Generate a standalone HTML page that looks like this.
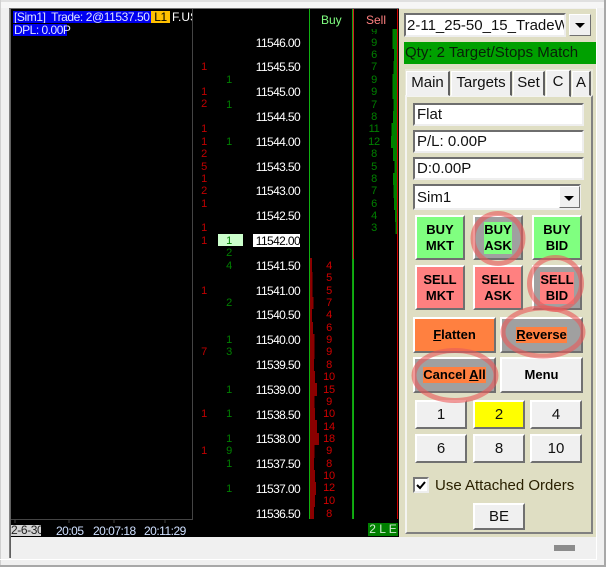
<!DOCTYPE html>
<html><head><meta charset="utf-8"><style>
html,body{margin:0;padding:0}
body{width:606px;height:567px;position:relative;overflow:hidden;background:#f0f0f0;font-family:"Liberation Sans",sans-serif}
div,span.a{position:absolute;box-sizing:border-box}
.n{position:absolute;font-size:11px;letter-spacing:-.3px;line-height:12px;height:12px;width:24px;text-align:center;white-space:pre}
.r{left:192px;color:#c00000}.g{left:217px;color:#008000}.s{left:317px;color:#d00000}.b{left:362px;color:#008000}
.p{position:absolute;left:240px;width:60px;text-align:right;font-size:12px;letter-spacing:-.62px;line-height:12px;color:#fff}
.t{font-size:12px;letter-spacing:-.5px;line-height:12px;color:#cfe0ff;white-space:nowrap}
.box{background:#fff;border:2px solid;border-color:#6e6e6e #eee #eee #6e6e6e;font-size:15px;line-height:19px;padding-left:2px;color:#111;white-space:nowrap;overflow:hidden}
.btn{border:2px solid;border-color:#fff #707070 #707070 #fff;display:flex;align-items:center;justify-content:center;text-align:center;font-size:13px;font-weight:bold;line-height:16px;color:#000}
.num{border:2px solid;border-color:#fff #707070 #707070 #fff;background:#f0f0f0;display:flex;align-items:center;justify-content:center;font-size:15px;color:#111}
.tab{border:1px solid;border-color:#fff #606060 #f0f0f0 #fff;border-right-width:2px;background:#f0f0f0;font-size:15px;line-height:22px;text-align:center;color:#111;overflow:hidden}
.arr{position:absolute;width:0;height:0;border-left:5px solid transparent;border-right:5px solid transparent;border-top:5px solid #000}
u{text-decoration:underline}
</style></head><body>
<div style="left:0;top:0;width:606px;height:2px;background:#e0e0e0"></div>
<div style="left:0;top:2px;width:606px;height:6px;background:#f6f6f6"></div>
<div style="left:0;top:0;width:1px;height:567px;background:#d0d0d0"></div>
<div style="left:604px;top:0;width:2px;height:567px;background:#a8a8a8"></div>
<div style="left:0;top:565px;width:606px;height:2px;background:#a8a8a8"></div>
<div style="left:0;top:559px;width:597px;height:1px;background:#fff"></div>
<div style="left:596px;top:8px;width:1px;height:552px;background:#fff"></div>
<div style="left:9px;top:8px;width:1px;height:550px;background:#808080"></div>
<div style="left:10px;top:8px;width:1px;height:550px;background:#606060"></div>
<div style="left:9px;top:8px;width:390px;height:1px;background:#707070"></div>
<!-- chart -->
<div style="left:11px;top:9px;width:388px;height:528px;background:#000;overflow:hidden"></div>
<div style="left:192px;top:9px;width:1px;height:511px;background:#444"></div>
<div style="left:11px;top:519px;width:182px;height:1px;background:#444"></div>
<div style="left:309px;top:9px;width:1px;height:510px;background:#10b010"></div>
<div style="left:352px;top:9px;width:1px;height:510px;background:#10a010"></div>
<div style="left:353px;top:9px;width:1px;height:250px;background:#d02020"></div>
<div style="left:353px;top:259px;width:1px;height:260px;background:#10b010"></div>
<div style="left:397px;top:9px;width:1px;height:510px;background:#d00000"></div>
<svg style="position:absolute;left:0;top:0" width="606" height="567">
<g fill="#008000">
<rect x="392.500" y="29" width="4.500" height="20"/><rect x="394" y="49" width="3" height="12"/><rect x="393.500" y="61" width="3.500" height="13"/><rect x="392.500" y="74" width="4.500" height="25"/><rect x="393.500" y="99" width="3.500" height="12"/><rect x="393" y="111" width="4" height="12"/><rect x="391.500" y="123" width="5.500" height="13"/><rect x="391" y="136" width="6" height="12"/><rect x="393" y="148" width="4" height="13"/><rect x="394.500" y="161" width="2.500" height="12"/><rect x="393" y="173" width="4" height="12"/><rect x="393.500" y="185" width="3.500" height="13"/><rect x="394" y="198" width="3" height="12"/><rect x="395" y="210" width="2" height="12"/><rect x="395.500" y="222" width="1.500" height="12"/>
</g>
<g fill="#8b0000">
<rect x="310" y="258" width="2" height="14"/><rect x="310" y="272" width="2.500" height="25"/><rect x="310" y="297" width="3.500" height="12"/><rect x="310" y="309" width="2" height="13"/><rect x="310" y="322" width="3" height="12"/><rect x="310" y="334" width="4.500" height="25"/><rect x="310" y="359" width="4" height="12"/><rect x="310" y="371" width="5" height="12"/><rect x="310" y="383" width="7" height="13"/><rect x="310" y="396" width="4.500" height="12"/><rect x="310" y="408" width="5" height="12"/><rect x="310" y="420" width="7" height="13"/><rect x="310" y="433" width="9" height="12"/><rect x="310" y="445" width="4.500" height="13"/><rect x="310" y="458" width="4" height="12"/><rect x="310" y="470" width="5" height="12"/><rect x="310" y="482" width="6" height="13"/><rect x="310" y="495" width="5" height="12"/><rect x="310" y="507" width="4" height="12"/>
</g>
<g stroke="#444" fill="none"><path d="M15 519.500V523M69 519.500V523M114 519.500V523M165 519.500V523"/></g>
</svg>
<!-- top labels -->
<div style="left:13px;top:11px;width:138px;height:12px;background:#0000f0;color:#dfe4ff;font-size:12px;letter-spacing:-.42px;line-height:12px;padding-left:1px;white-space:pre;overflow:hidden">[Sim1]  Trade: 2@11537.50</div>
<div style="left:151px;top:11px;width:19px;height:12px;background:#ffc000;color:#000;font-size:12px;letter-spacing:-.4px;line-height:12px;text-align:center">L1</div>
<div style="left:172px;top:11px;width:20px;height:12px;color:#fff;font-size:12px;line-height:12px;overflow:hidden;white-space:nowrap">F.US</div>
<div style="left:13px;top:24px;width:54px;height:12px;background:#0000f0;color:#dfe4ff;font-size:12px;letter-spacing:-.5px;line-height:12px;padding-left:1px;white-space:nowrap">DPL: 0.00P</div>
<div style="left:321px;top:14px;width:20px;height:12px;color:#80ff80;font-size:12px;line-height:12px;white-space:nowrap">Buy</div>
<div style="left:366px;top:14px;width:20px;height:12px;color:#ff8080;font-size:12px;line-height:12px;white-space:nowrap">Sell</div>
<!-- highlights -->
<div style="left:218px;top:234px;width:25px;height:12px;background:#ccffcc"></div>
<div style="left:253px;top:234px;width:47px;height:13px;background:#fff"></div>
<!-- prices -->
<span class="p" style="top:37px">11546.00</span><span class="p" style="top:61px">11545.50</span><span class="p" style="top:86px">11545.00</span><span class="p" style="top:111px">11544.50</span><span class="p" style="top:136px">11544.00</span><span class="p" style="top:161px">11543.50</span><span class="p" style="top:185px">11543.00</span><span class="p" style="top:210px">11542.50</span><span class="p" style="top:235px;color:#000">11542.00</span><span class="p" style="top:260px">11541.50</span><span class="p" style="top:285px">11541.00</span><span class="p" style="top:309px">11540.50</span><span class="p" style="top:334px">11540.00</span><span class="p" style="top:359px">11539.50</span><span class="p" style="top:384px">11539.00</span><span class="p" style="top:409px">11538.50</span><span class="p" style="top:433px">11538.00</span><span class="p" style="top:458px">11537.50</span><span class="p" style="top:483px">11537.00</span><span class="p" style="top:508px">11536.50</span>
<!-- red left -->
<span class="n r" style="top:61px">1</span><span class="n r" style="top:86px">1</span><span class="n r" style="top:98px">2</span><span class="n r" style="top:123px">1</span><span class="n r" style="top:136px">1</span><span class="n r" style="top:148px">2</span><span class="n r" style="top:161px">5</span><span class="n r" style="top:173px">1</span><span class="n r" style="top:185px">2</span><span class="n r" style="top:198px">1</span><span class="n r" style="top:222px">1</span><span class="n r" style="top:235px">1</span><span class="n r" style="top:285px">1</span><span class="n r" style="top:346px">7</span><span class="n r" style="top:408px">1</span><span class="n r" style="top:445px">1</span>
<!-- green left -->
<span class="n g" style="top:74px">1</span><span class="n g" style="top:99px">1</span><span class="n g" style="top:136px">1</span><span class="n g" style="top:235px">1</span><span class="n g" style="top:247px">2</span><span class="n g" style="top:260px">4</span><span class="n g" style="top:297px">2</span><span class="n g" style="top:334px">1</span><span class="n g" style="top:346px">3</span><span class="n g" style="top:384px">1</span><span class="n g" style="top:408px">1</span><span class="n g" style="top:433px">1</span><span class="n g" style="top:445px">9</span><span class="n g" style="top:458px">1</span><span class="n g" style="top:483px">1</span>
<!-- sell red col -->
<span class="n s" style="top:260px">4</span><span class="n s" style="top:272px">5</span><span class="n s" style="top:285px">5</span><span class="n s" style="top:297px">7</span><span class="n s" style="top:309px">4</span><span class="n s" style="top:322px">6</span><span class="n s" style="top:334px">9</span><span class="n s" style="top:346px">9</span><span class="n s" style="top:359px">8</span><span class="n s" style="top:371px">10</span><span class="n s" style="top:384px">15</span><span class="n s" style="top:396px">9</span><span class="n s" style="top:408px">10</span><span class="n s" style="top:421px">14</span><span class="n s" style="top:433px">18</span><span class="n s" style="top:445px">9</span><span class="n s" style="top:458px">8</span><span class="n s" style="top:470px">10</span><span class="n s" style="top:482px">12</span><span class="n s" style="top:495px">10</span><span class="n s" style="top:508px">8</span>
<!-- sell green col -->
<div style="left:362px;top:29px;width:24px;height:5px;overflow:hidden"><span class="n b" style="left:0;top:-3px">9</span></div><span class="n b" style="top:37px">9</span><span class="n b" style="top:49px">6</span><span class="n b" style="top:61px">7</span><span class="n b" style="top:74px">9</span><span class="n b" style="top:86px">9</span><span class="n b" style="top:99px">7</span><span class="n b" style="top:111px">8</span><span class="n b" style="top:123px">11</span><span class="n b" style="top:136px">12</span><span class="n b" style="top:148px">8</span><span class="n b" style="top:161px">5</span><span class="n b" style="top:173px">8</span><span class="n b" style="top:185px">7</span><span class="n b" style="top:198px">6</span><span class="n b" style="top:210px">4</span><span class="n b" style="top:222px">3</span>
<!-- axis -->
<div style="left:11px;top:525px;width:30px;height:11px;background:#d4d4d4;color:#222;font-size:12px;letter-spacing:-.4px;line-height:11px;overflow:hidden;white-space:nowrap;text-align:right">2-6-30</div>
<div class="t" style="left:56px;top:525px">20:05</div>
<div class="t" style="left:93px;top:525px">20:07:18</div>
<div class="t" style="left:144px;top:525px">20:11:29</div>
<div style="left:368px;top:523px;width:30px;height:13px;background:#008000;color:#cfe8cf;font-size:12px;line-height:13px;text-align:center;white-space:pre">2 L E</div>
<!-- right panel -->
<div style="left:399px;top:9px;width:197px;height:528px;background:#dfdec3"></div>
<div class="box" style="left:404px;top:13px;width:162px;height:24px;padding:1px 0 0 1px">2-11_25-50_15_TradeW</div>
<div style="left:569px;top:14px;width:22px;height:22px;background:#f0f0f0;border:1px solid;border-color:#fff #707070 #707070 #fff"></div>
<span class="arr" style="left:575px;top:23px"></span>
<div style="left:404px;top:42px;width:192px;height:22px;background:#00a000;color:#082008;font-size:15px;line-height:21px;padding-left:1px;white-space:nowrap">Qty: 2 Target/Stops Match</div>
<div style="left:405px;top:69px;width:188px;height:26px;background:#e8e8d8"></div>
<div style="left:405px;top:95px;width:188px;height:439px;border:2px solid;border-color:#f4f4f0 #808080 #808080 #f4f4f0"></div>
<div class="tab" style="left:406px;top:71px;width:44px;height:25px">Main</div>
<div class="tab" style="left:451px;top:71px;width:61px;height:25px">Targets</div>
<div class="tab" style="left:513px;top:71px;width:32px;height:25px">Set</div>
<div class="tab" style="left:546px;top:70px;width:25px;height:27px">C</div>
<div class="tab" style="left:572px;top:71px;width:19px;height:25px">A</div>
<div class="box" style="left:413px;top:103px;width:171px;height:23px">Flat</div>
<div class="box" style="left:413px;top:130px;width:171px;height:23px">P/L: 0.00P</div>
<div class="box" style="left:413px;top:157px;width:171px;height:23px">D:0.00P</div>
<div class="box" style="left:413px;top:184px;width:168px;height:26px;padding:2px 0 0 2px">Sim1</div>
<div style="left:559px;top:186px;width:21px;height:22px;background:#f0f0f0;border:1px solid;border-color:#fff #707070 #707070 #fff"></div>
<span class="arr" style="left:564px;top:196px"></span>
<!-- order buttons -->
<div class="btn" style="left:415px;top:215px;width:50px;height:45px;background:#80ff80">BUY<br>MKT</div>
<div class="btn" style="left:473px;top:215px;width:50px;height:45px;background:#a0a0a0"><span style="background:#80ff80;display:block;width:28px">BUY<br>ASK</span></div>
<div class="btn" style="left:532px;top:215px;width:50px;height:45px;background:#80ff80">BUY<br>BID</div>
<div class="btn" style="left:415px;top:265px;width:50px;height:45px;background:#ff8080">SELL<br>MKT</div>
<div class="btn" style="left:473px;top:265px;width:50px;height:45px;background:#ff8080">SELL<br>ASK</div>
<div class="btn" style="left:532px;top:265px;width:50px;height:45px;background:#a0a0a0"><span style="background:#ff8080;display:block;width:34px">SELL<br>BID</span></div>
<div class="btn" style="left:413px;top:317px;width:83px;height:36px;background:#ff8040"><span><u>F</u>latten</span></div>
<div class="btn" style="left:500px;top:317px;width:83px;height:36px;background:#a0a0a0"><span style="background:#ff8040"><u>R</u>everse</span></div>
<div class="btn" style="left:413px;top:357px;width:83px;height:36px;background:#a0a0a0"><span style="background:#ff8040">Cancel <u>A</u>ll</span></div>
<div class="btn" style="left:500px;top:357px;width:83px;height:36px;background:#f0f0f0">Menu</div>
<!-- qty -->
<div class="num" style="left:415px;top:400px;width:52px;height:29px">1</div>
<div class="num" style="left:473px;top:400px;width:52px;height:29px;background:#ff0">2</div>
<div class="num" style="left:530px;top:400px;width:52px;height:29px">4</div>
<div class="num" style="left:415px;top:434px;width:52px;height:29px">6</div>
<div class="num" style="left:473px;top:434px;width:52px;height:29px">8</div>
<div class="num" style="left:530px;top:434px;width:52px;height:29px">10</div>
<div style="left:413px;top:477px;width:16px;height:16px;background:#fff;border:2px solid;border-color:#777 #eee #eee #777"></div>
<svg style="position:absolute;left:413px;top:477px" width="16" height="16"><path d="M4 8l3 3 5-6" fill="none" stroke="#000" stroke-width="2"/></svg>
<div style="left:435px;top:476px;width:150px;height:19px;color:#2a2000;font-size:15px;line-height:19px;white-space:nowrap">Use Attached Orders</div>
<div class="num" style="left:473px;top:503px;width:52px;height:27px">BE</div>
<!-- grip -->
<div style="left:554px;top:545px;width:21px;height:6px;background:#8c8c8c"></div>
<!-- circles -->
<svg style="position:absolute;left:0;top:0" width="606" height="567">
<g fill="none" stroke="#e85a5a" stroke-opacity=".62" stroke-width="5">
<ellipse cx="498" cy="238.500" rx="25" ry="25"/>
<ellipse cx="555.500" cy="283.500" rx="26" ry="26"/>
<ellipse cx="543" cy="332" rx="40" ry="24"/>
<ellipse cx="455" cy="375.500" rx="41" ry="25"/>
</g></svg>
</body></html>
